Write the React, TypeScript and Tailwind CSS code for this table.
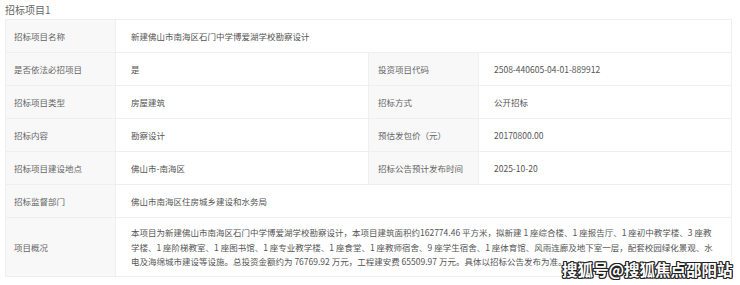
const rows: { label: string; value: string; label2?: string; value2?: string }[] = [
  { label: '招标项目名称', value: '新建佛山市南海区石门中学博爱湖学校勘察设计' },
  { label: '是否依法必招项目', value: '是', label2: '投资项目代码', value2: '2508-440605-04-01-889912' },
  { label: '招标项目类型', value: '房屋建筑', label2: '招标方式', value2: '公开招标' },
  { label: '招标内容', value: '勘察设计', label2: '预估发包价（元）', value2: '20170800.00' },
  { label: '招标项目建设地点', value: '佛山市-南海区', label2: '招标公告预计发布时间', value2: '2025-10-20' },
  { label: '招标监督部门', value: '佛山市南海区住房城乡建设和水务局' },
];

const overview = [
  '本项目为新建佛山市南海区石门中学博爱湖学校勘察设计，本项目建筑面积约162774.46 平方米，拟新建 1 座综合楼、1 座报告厅、1 座初中教学楼、3 座教',
  '学楼、1 座阶梯教室、1 座图书馆、1 座专业教学楼、1 座食堂、1 座教师宿舍、9 座学生宿舍、1 座体育馆、风雨连廊及地下室一层，配套校园绿化景观、水',
  '电及海绵城市建设等设施。总投资金额约为 76769.92 万元，工程建安费 65509.97 万元。具体以招标公告发布为准。',
];

const labelCell = 'h-[33px] border border-[#efefef] bg-[#f8f8f8] pl-2 text-[#666] align-middle';
const valueCell = 'h-[33px] border border-[#efefef] bg-white pl-[15px] text-[#555] align-middle';

export default function App() {
  return (
    <div className="relative h-[285px] w-[740px] overflow-hidden bg-white pl-[5px] font-['Noto_Sans_CJK_SC','Noto_Sans',sans-serif]">
      <div className="h-[19px] pt-[2px] text-[10px] leading-[15px] text-[#666]">招标项目1</div>
      <table className="w-[727px] table-fixed border-collapse text-[8.5px] leading-[12px]">
        <colgroup>
          <col className="w-[110px]" />
          <col className="w-[253px]" />
          <col className="w-[110px]" />
          <col />
        </colgroup>
        <tbody>
          {rows.map((r) => (
            <tr key={r.label}>
              <td className={labelCell}>{r.label}</td>
              {r.label2 ? (
                <>
                  <td className={valueCell}>{r.value}</td>
                  <td className={labelCell + ' pl-[9px]'}>{r.label2}</td>
                  <td className={valueCell}>{r.value2}</td>
                </>
              ) : (
                <td className={valueCell} colSpan={3}>
                  {r.value}
                </td>
              )}
            </tr>
          ))}
          <tr>
            <td className="h-[59px] border border-[#efefef] bg-[#f8f8f8] pl-2 text-[#666] align-middle">项目概况</td>
            <td className="h-[59px] border border-[#efefef] bg-white pl-[15px] text-[#555] align-middle" colSpan={3}>
              {overview.map((line) => (
                <div key={line} className="whitespace-nowrap leading-[14.5px]">
                  {line}
                </div>
              ))}
            </td>
          </tr>
        </tbody>
      </table>
      <div className="absolute left-[562px] top-[258px] whitespace-nowrap text-[15.5px] font-bold leading-[22px] text-white [text-shadow:1px_0_0_#222,-1px_0_0_#222,0_1px_0_#222,0_-1px_0_#222,1px_1px_0_#222,-1px_-1px_0_#222,1px_-1px_0_#222,-1px_1px_0_#222]">
        搜狐号@搜狐焦点邵阳站
      </div>
    </div>
  );
}
